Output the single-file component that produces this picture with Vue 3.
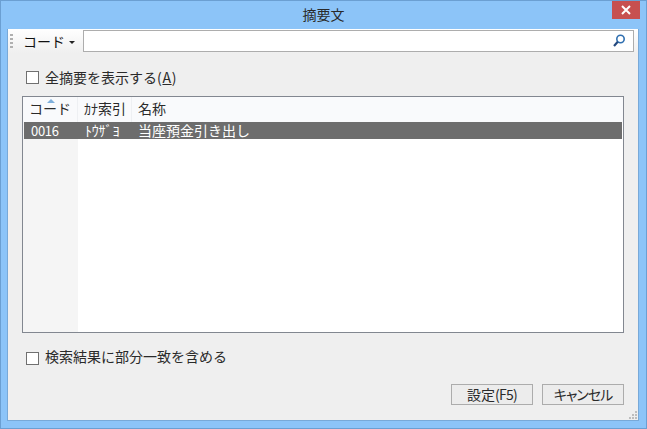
<template>
  <div class="window">
    <div class="titlebar">
      <span class="title">摘要文</span>
      <button class="close">
        <svg width="10" height="10" viewBox="0 0 10 10">
          <path d="M1 1L9 9M9 1L1 9" stroke="#fff" stroke-width="2" fill="none" />
        </svg>
      </button>
    </div>
    <div class="client">
      <div class="toolbar">
        <span class="grip"></span>
        <span class="dropdown">コード</span>
        <span class="caret"></span>
        <div class="search">
          <svg width="14" height="14" viewBox="0 0 14 14">
            <circle cx="8.5" cy="5" r="3.7" stroke="#2f6fb0" stroke-width="1.6" fill="#fff" />
            <path d="M5.8 7.8L2 12" stroke="#24497f" stroke-width="2.2" fill="none" />
          </svg>
        </div>
      </div>
      <div class="body">
        <label class="check top"><span class="box"></span>全摘要を表示する<span class="mnemonic">(<u>A</u>)</span></label>
        <div class="list">
          <div class="head">
            <div v-for="col in columns" :key="col.label" class="th" :style="{ width: col.width + 'px' }">
              <span v-if="col.sorted" class="sort"></span>{{ col.label }}
            </div>
          </div>
          <div class="rows">
            <div class="row">
              <span class="cell code">0016</span>
              <span class="cell kana">ﾄｳｻﾞﾖ</span>
              <span class="cell">当座預金引き出し</span>
            </div>
            <div class="keycol"></div>
          </div>
        </div>
        <label class="check bottom"><span class="box"></span>検索結果に部分一致を含める</label>
        <div class="actions">
          <button class="btn">設定<span class="key">(F5)</span></button>
          <button class="btn narrow">キャンセル</button>
        </div>
      </div>
      <svg class="resize" width="10" height="10" viewBox="0 0 10 10">
        <path d="M7 1h2v2H7zM4 4h2v2H4zM7 4h2v2H7zM1 7h2v2H1zM4 7h2v2H4zM7 7h2v2H7z" fill="#bdbdbd" />
      </svg>
    </div>
  </div>
</template>

<script setup>
const columns = [
  { label: "コード", width: 55, sorted: true },
  { label: "ｶﾅ索引", width: 54 },
  { label: "名称", width: 200 },
];
</script>

<style>
html,
body {
  margin: 0;
  overflow: hidden;
}
</style>

<style scoped>
.window {
  width: 647px;
  height: 429px;
  box-sizing: border-box;
  display: flex;
  flex-direction: column;
  background: #8cc4f8;
  border: 1px solid #6b9fd2;
  font-family: "Noto Sans CJK JP", "Liberation Sans", sans-serif;
  font-size: 14px;
  color: #2a2a2a;
}

.titlebar {
  height: 28px;
  flex: none;
  position: relative;
  display: flex;
  justify-content: center;
  padding-top: 3px;
  box-sizing: border-box;
  line-height: 20px;
}

.close {
  position: absolute;
  top: 0;
  right: 6px;
  width: 28px;
  height: 18px;
  padding: 0;
  border: none;
  background: #c75050;
  display: flex;
  align-items: center;
  justify-content: center;
}

.client {
  flex: 1;
  margin: 0 7px 7px 6px;
  background: #efefef;
  border-style: solid;
  border-width: 0 1px 1px;
  border-color: #78a9d8;
  position: relative;
  display: flex;
  flex-direction: column;
}

.toolbar {
  height: 24px;
  flex: none;
  display: flex;
  align-items: center;
  background: linear-gradient(#ffffff, #efefef);
  padding-left: 2px;
}

.grip {
  width: 3px;
  height: 14px;
  margin-right: 10px;
  background: repeating-linear-gradient(#b0b0b0 0 2px, transparent 2px 4px);
}

.dropdown {
  width: 42px;
  color: #111;
}

.caret {
  width: 0;
  height: 0;
  border: 3px solid transparent;
  border-top: 3px solid #222;
  border-bottom: none;
  margin: 2px 8px 0 4px;
}

.search {
  width: 551px;
  height: 22px;
  box-sizing: border-box;
  background: #fff;
  border: 1px solid #adadad;
  display: flex;
  align-items: center;
  justify-content: flex-end;
  padding-right: 7px;
}

.body {
  flex: 1;
  display: flex;
  flex-direction: column;
  padding: 0 14px 14px;
}

.check {
  display: flex;
  align-items: center;
  padding-left: 4px;
  line-height: 20px;
}

.check.top {
  margin-top: 14px;
}

.check.bottom {
  margin-top: 13px;
}

.check.bottom .box {
  margin-top: 4px;
}

.mnemonic {
  letter-spacing: 0.7px;
}

.box {
  width: 13px;
  height: 13px;
  box-sizing: border-box;
  background: #fff;
  border: 1px solid #707070;
  margin-right: 6px;
}

.list {
  margin-top: 9px;
  height: 237px;
  box-sizing: border-box;
  background: #fff;
  border: 1px solid #828790;
  display: flex;
  flex-direction: column;
}

.head {
  height: 25px;
  flex: none;
  display: flex;
  background: #f9fafc;
}

.th {
  position: relative;
  box-sizing: border-box;
  padding: 1px 0 0 6px;
  line-height: 20px;
  border-right: 1px solid #eef0f3;
  white-space: nowrap;
}

.th:last-child {
  border-right: none;
}

.sort {
  position: absolute;
  top: 2px;
  left: 24px;
  width: 0;
  height: 0;
  border: 4px solid transparent;
  border-top: none;
  border-bottom: 4px solid #7fb0dc;
}

.rows {
  flex: 1;
  position: relative;
}

.keycol {
  position: absolute;
  top: 0;
  bottom: 0;
  left: 0;
  width: 55px;
  background: #f5f5f5;
}

.row {
  position: relative;
  z-index: 1;
  height: 17px;
  margin: 0 1px;
  background: #6d6d6d;
  color: #fff;
  display: flex;
  align-items: center;
  line-height: 17px;
}

.cell {
  white-space: nowrap;
}

.code {
  width: 54px;
  padding-left: 7px;
  box-sizing: border-box;
  font-size: 13px;
  letter-spacing: -0.3px;
}

.kana {
  width: 54px;
  padding-left: 7px;
  box-sizing: border-box;
  letter-spacing: -0.2px;
}

.cell:last-child {
  padding-left: 6px;
}

.actions {
  margin-top: 18px;
  display: flex;
  justify-content: flex-end;
  gap: 9px;
}

.btn {
  width: 82px;
  height: 21px;
  padding: 0;
  box-sizing: border-box;
  background: #ececec;
  border: 1px solid #acacac;
  font: inherit;
  line-height: 17px;
  color: #2a2a2a;
}

.key {
  letter-spacing: -0.8px;
}

.narrow {
  font-feature-settings: "palt";
  letter-spacing: -1px;
}

.resize {
  position: absolute;
  right: 0;
  bottom: 0;
}
</style>
